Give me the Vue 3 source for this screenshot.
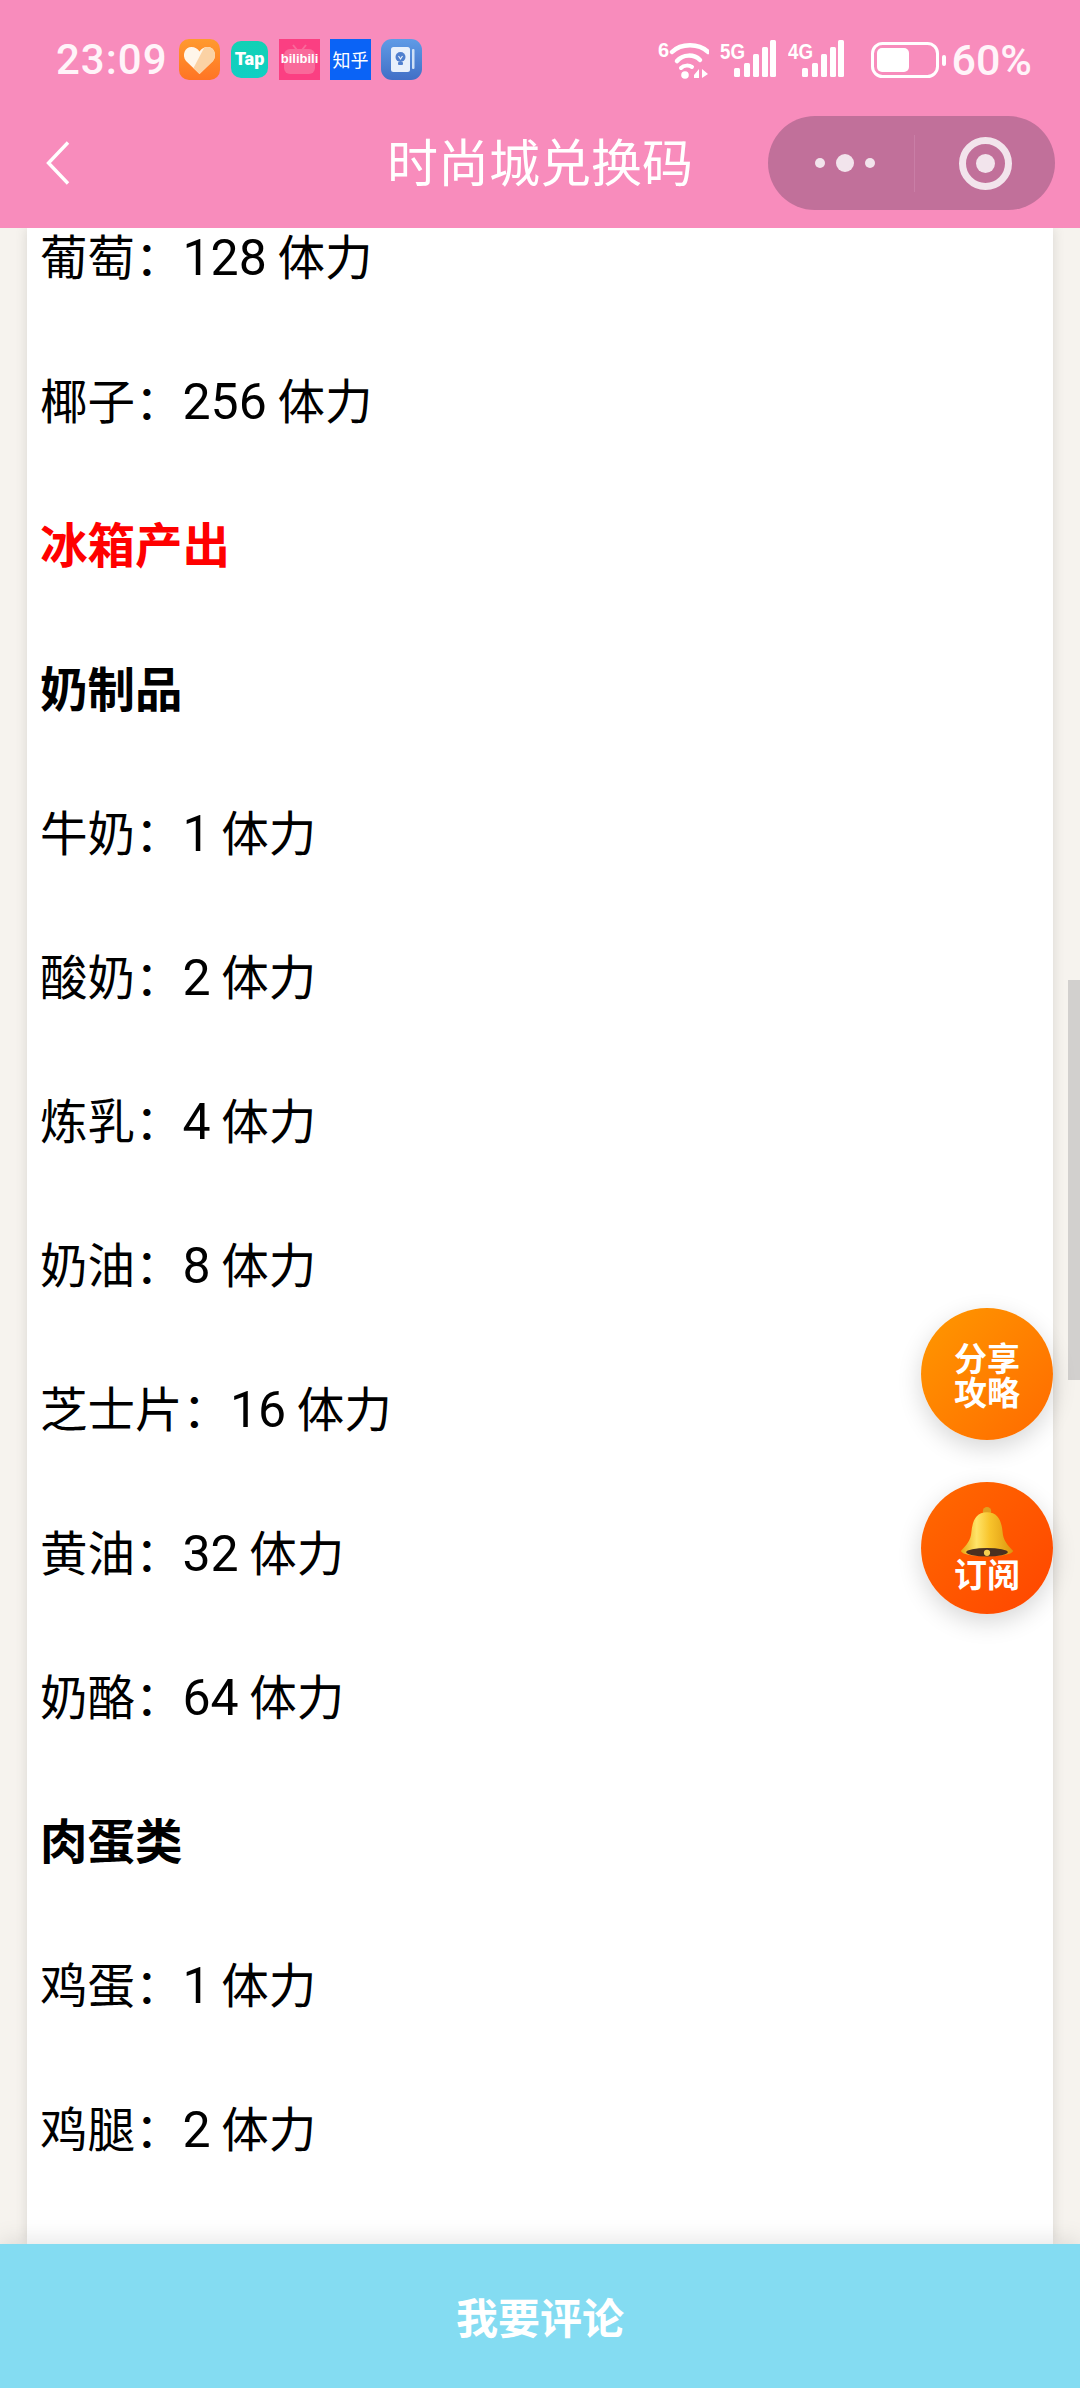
<script setup>
const rows = [
  { label: '葡萄：', num: '128', unit: ' 体力' },
  { label: '椰子：', num: '256', unit: ' 体力' },
  { label: '冰箱产出', type: 'red' },
  { label: '奶制品', type: 'bold' },
  { label: '牛奶：', num: '1', unit: ' 体力' },
  { label: '酸奶：', num: '2', unit: ' 体力' },
  { label: '炼乳：', num: '4', unit: ' 体力' },
  { label: '奶油：', num: '8', unit: ' 体力' },
  { label: '芝士片：', num: '16', unit: ' 体力' },
  { label: '黄油：', num: '32', unit: ' 体力' },
  { label: '奶酪：', num: '64', unit: ' 体力' },
  { label: '肉蛋类', type: 'bold' },
  { label: '鸡蛋：', num: '1', unit: ' 体力' },
  { label: '鸡腿：', num: '2', unit: ' 体力' }
]

const signals = ['5G', '4G']
</script>

<template>
  <div class="page">
    <header class="top">
      <div class="status">
        <span class="time">23:09</span>
        <div class="apps">
          <svg class="app" viewBox="0 0 41 41">
            <defs>
              <linearGradient id="heartBg" x1="0" y1="0" x2="0" y2="1">
                <stop offset="0" stop-color="#ff9a2e" />
                <stop offset="1" stop-color="#ff7424" />
              </linearGradient>
            </defs>
            <rect width="41" height="41" rx="10" fill="url(#heartBg)" />
            <path d="M20.5 35 L7 22 C2.5 16 6 8 12.5 8 C16 8 18.5 9.5 20.5 12.5 C22.5 9.5 25 8 28.5 8 C35 8 38.5 16 34 22 Z" fill="#fff6ea" />
            <path d="M20.5 35 L14.5 29 L25 9 C26 8.4 27.2 8 28.5 8 C35 8 38.5 16 34 22 Z" fill="#fbd2a4" />
          </svg>
          <div class="app app-tap">Tap</div>
          <div class="app app-bili">
            <svg class="bili-tv" viewBox="0 0 41 41">
              <path d="M14 6 L18 11 M27 6 L23 11" stroke="#f9699a" stroke-width="2" fill="none" />
              <rect x="5" y="10" width="31" height="25" rx="6" fill="#f9699a" />
            </svg>
            <span class="bili-text">bilibili</span>
          </div>
          <div class="app app-zhihu">知乎</div>
          <svg class="app" viewBox="0 0 41 41">
            <defs>
              <linearGradient id="noteBg" x1="0" y1="0" x2="0" y2="1">
                <stop offset="0" stop-color="#5f9be6" />
                <stop offset="1" stop-color="#416fc6" />
              </linearGradient>
            </defs>
            <rect width="41" height="41" rx="11" fill="url(#noteBg)" />
            <rect x="10" y="8" width="19" height="25" rx="2.5" fill="#e8f0fb" />
            <rect x="31" y="10" width="2.5" height="20" rx="1" fill="#cfe0f6" />
            <circle cx="19.5" cy="18" r="5" fill="#4f7fce" />
            <rect x="17" y="23" width="5" height="3" rx="1" fill="#4f7fce" />
            <path d="M17.5 17 L19.5 20 L21.5 17" stroke="#e8f0fb" stroke-width="1.2" fill="none" />
          </svg>
        </div>
        <div class="indicators">
          <svg class="wifi" viewBox="0 0 51 40">
            <text x="0" y="17" class="tiny tiny--six">6</text>
            <path d="M14 12 C23 3 41 3 50 12" stroke="#fff" stroke-width="4.5" fill="none" stroke-linecap="round" />
            <path d="M19 21 C25 14 36 14 42 20" stroke="#fff" stroke-width="4.5" fill="none" stroke-linecap="round" />
            <path d="M23 28 C26 25 31 25 34 27" stroke="#fff" stroke-width="4" fill="none" stroke-linecap="round" />
            <circle cx="27" cy="35" r="3.8" fill="#fff" />
            <path d="M36 35 L41 29 V38 H36 Z M44 29 L50 34 L44 38 Z" fill="#fff" />
          </svg>
          <svg v-for="name in signals" :key="name" class="signal" viewBox="0 0 56 40">
            <text x="0" y="19" class="tiny" textLength="25" lengthAdjust="spacingAndGlyphs">{{ name }}</text>
            <rect x="14" y="28" width="6" height="9" rx="1.5" fill="#fff" />
            <rect x="24" y="23" width="6" height="14" rx="1.5" fill="#fff" />
            <rect x="33" y="14" width="6" height="23" rx="1.5" fill="#fff" />
            <rect x="42" y="7" width="6" height="30" rx="1.5" fill="#fff" />
            <rect x="50" y="0" width="6" height="37" rx="1.5" fill="#fff" />
          </svg>
          <svg class="battery" viewBox="0 0 75 36">
            <rect x="1.5" y="1.5" width="65" height="33" rx="10" fill="none" stroke="#fff" stroke-width="3" />
            <rect x="6" y="6" width="32" height="24" rx="5" fill="#fff" />
            <rect x="71" y="13" width="4" height="11" rx="2" fill="#fff" />
          </svg>
          <span class="percent">60%</span>
        </div>
      </div>
      <nav class="nav">
        <svg class="back" viewBox="0 0 24 44">
          <path d="M22 1.5 L2.5 22 L22 42.5" stroke="#fff" stroke-width="3.4" fill="none" />
        </svg>
        <h1 class="title">时尚城兑换码</h1>
        <div class="capsule">
          <div class="capsule-part capsule-more">
            <i class="dot"></i>
            <i class="dot dot-big"></i>
            <i class="dot"></i>
          </div>
          <div class="capsule-part">
            <i class="target"></i>
          </div>
        </div>
      </nav>
    </header>

    <main class="main">
      <article class="card">
        <p
          v-for="row in rows"
          :key="row.label"
          :class="['row', row.type && `row--${row.type}`]"
        >{{ row.label }}<span v-if="row.num" class="num">{{ row.num }}</span>{{ row.unit }}</p>
      </article>
      <div class="scrollbar"></div>
      <div class="fabs">
        <button class="fab fab--share">分享<br />攻略</button>
        <button class="fab fab--sub">
          <svg class="bell" viewBox="0 0 50 50">
            <defs>
              <linearGradient id="bellBody" x1="0" y1="0" x2="1" y2="0">
                <stop offset="0" stop-color="#e8a814" />
                <stop offset="0.3" stop-color="#ffe468" />
                <stop offset="0.55" stop-color="#f8c42c" />
                <stop offset="1" stop-color="#dc960e" />
              </linearGradient>
            </defs>
            <circle cx="25" cy="4" r="4" fill="#e0a020" />
            <path d="M25 5 C14 5 11 14 10 24 C9.5 32 5 37 0 42 C0 49 50 49 50 42 C45 37 40.5 32 40 24 C39 14 36 5 25 5 Z" fill="url(#bellBody)" />
            <ellipse cx="25" cy="43.5" rx="20" ry="4" fill="#4a3020" />
            <circle cx="25" cy="44" r="3" fill="#f6d050" />
          </svg>
          <span>订阅</span>
        </button>
      </div>
    </main>

    <footer class="footer">我要评论</footer>
  </div>
</template>

<style>
body {
  margin: 0;
}
</style>

<style scoped>
.page {
  display: flex;
  flex-direction: column;
  width: 1080px;
  height: 2388px;
  overflow: hidden;
  background: #f6f3ee;
  font-family: "Noto Sans CJK SC", "Noto Sans", sans-serif;
}

/* Header */
.top {
  position: relative;
  z-index: 2;
  height: 228px;
  flex: none;
  background: #f88cbc;
  color: #fff;
}

.status {
  display: flex;
  align-items: center;
  height: 116px;
  padding: 3px 48px 0 56px;
  box-sizing: border-box;
}

.time {
  width: 112px;
  margin-right: 11px;
  font-family: Roboto, sans-serif;
  font-size: 42px;
  font-weight: 500;
  letter-spacing: 1px;
  color: #fff4f9;
}

.apps {
  display: flex;
  align-items: center;
  gap: 10px;
}

.app {
  display: block;
  width: 41px;
  height: 41px;
  flex: none;
}

.app-tap {
  width: 37px;
  height: 37px;
  margin: 0 1px;
  border-radius: 10px;
  background: linear-gradient(#12d1b4, #10cfc4);
  color: #fff;
  font-family: Roboto, sans-serif;
  font-size: 18px;
  font-weight: 900;
  line-height: 35px;
  text-align: center;
}

.app-bili {
  position: relative;
  background: #fb3f82;
  overflow: hidden;
}

.bili-tv {
  display: block;
  width: 41px;
  height: 41px;
}

.bili-text {
  position: absolute;
  top: 12px;
  left: 0;
  width: 41px;
  color: #fff;
  font-family: "Liberation Sans", sans-serif;
  font-size: 13px;
  font-weight: 700;
  text-align: center;
}

.app-zhihu {
  background: #0a63f6;
  color: #fff;
  font-size: 18px;
  line-height: 41px;
  text-align: center;
  white-space: nowrap;
}

.indicators {
  display: flex;
  align-items: center;
  margin-left: auto;
}

.wifi {
  width: 51px;
  height: 40px;
  margin-right: 11px;
}

.signal {
  width: 56px;
  height: 40px;
  margin-right: 12px;
}

.signal:last-of-type {
  margin-right: 0;
}

.tiny {
  font-family: "Liberation Sans", sans-serif;
  font-size: 22px;
  font-weight: 700;
  fill: #fff;
}

.tiny--six {
  font-size: 20px;
}

.battery {
  width: 75px;
  height: 36px;
  margin: 0 5px 0 15px;
}

.percent {
  font-family: Roboto, sans-serif;
  font-size: 43px;
  font-weight: 500;
  color: #fff4f9;
}

.nav {
  display: grid;
  grid-template-columns: 1fr auto 1fr;
  align-items: center;
  height: 94px;
  padding: 0 25px;
}

.back {
  display: block;
  width: 24px;
  height: 44px;
  margin-left: 21px;
}

.title {
  margin: 0;
  padding-bottom: 6px;
  font-size: 51px;
  font-weight: 400;
  line-height: 88px;
  color: #fff;
}

.capsule {
  justify-self: end;
  display: flex;
  width: 287px;
  height: 94px;
  border-radius: 47px;
  background: #c1709a;
}

.capsule-part {
  display: flex;
  flex: 1;
  align-items: center;
  justify-content: center;
  gap: 11px;
}

.capsule-more {
  position: relative;
  padding-left: 7px;
}

.capsule-more::after {
  content: "";
  position: absolute;
  top: 19px;
  right: 0;
  width: 1px;
  height: 57px;
  background: #c97ea6;
}

.dot {
  width: 10px;
  height: 10px;
  border-radius: 50%;
  background: #f2e4ec;
}

.dot-big {
  width: 18px;
  height: 18px;
}

.target {
  position: relative;
  width: 53px;
  height: 53px;
  box-sizing: border-box;
  border: 7px solid #f2e4ec;
  border-radius: 50%;
}

.target::after {
  content: "";
  position: absolute;
  top: 10px;
  left: 10px;
  width: 19px;
  height: 19px;
  border-radius: 50%;
  background: #f2e4ec;
}

/* Content */
.main {
  position: relative;
  flex: 1;
  min-height: 0;
  overflow: hidden;
}

.card {
  display: flex;
  flex-direction: column;
  gap: 90px;
  height: 100%;
  margin: 0 27px;
  background: #fff;
  box-shadow: 0 0 12px rgba(0, 0, 0, 0.12);
}

.row {
  height: 54px;
  margin: 0;
  padding: 0 13px;
  color: #000;
  font-size: 47.5px;
  line-height: 54px;
  white-space: pre;
}

.num {
  font-family: Roboto, sans-serif;
  font-size: 50px;
}

.row--bold {
  font-weight: 700;
}

.row--red {
  color: #f00;
  font-weight: 700;
}

.scrollbar {
  position: absolute;
  top: 752px;
  right: 0;
  width: 12px;
  height: 400px;
  background: #d2d0ce;
}

.fabs {
  position: absolute;
  top: 1080px;
  right: 27px;
  display: flex;
  flex-direction: column;
  gap: 42px;
}

.fab {
  display: flex;
  flex-direction: column;
  align-items: center;
  justify-content: center;
  width: 132px;
  height: 132px;
  padding: 0;
  border: none;
  border-radius: 50%;
  color: #fff;
  font-family: inherit;
  font-size: 33px;
  font-weight: 700;
  line-height: 34px;
  box-shadow: 0 8px 24px rgba(0, 0, 0, 0.16);
}

.fab--share {
  display: block;
  background: linear-gradient(135deg, #ff9800, #ff6a00);
}

.fab--sub {
  background: linear-gradient(135deg, #ff6a00, #ff4500);
}

.bell {
  display: block;
  width: 52px;
  height: 52px;
  margin-bottom: -3px;
}

.footer {
  position: relative;
  z-index: 1;
  flex: none;
  height: 144px;
  background: #84dcf2;
  color: #fff;
  font-size: 42px;
  font-weight: 700;
  line-height: 144px;
  text-align: center;
  box-shadow: 0 -4px 22px rgba(0, 0, 0, 0.1);
}
</style>
